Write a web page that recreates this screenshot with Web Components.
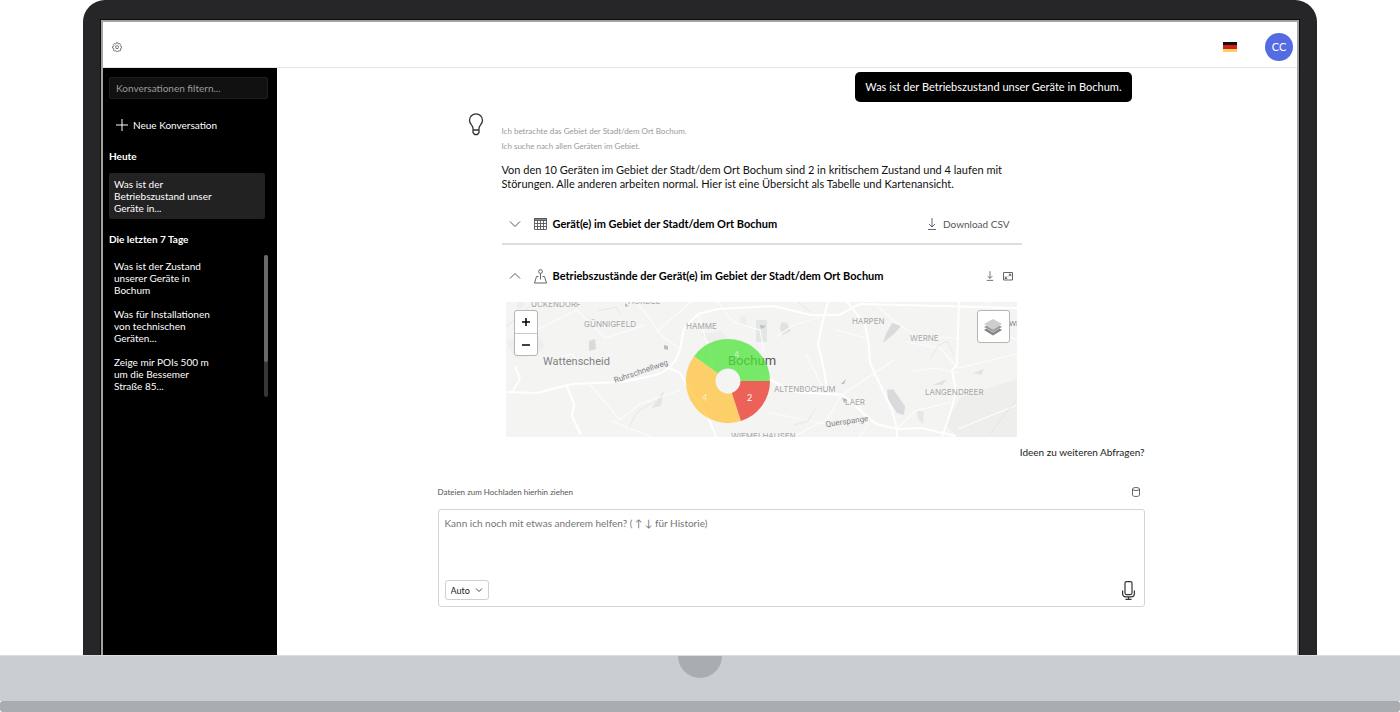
<!DOCTYPE html>
<html lang="de">
<head>
<meta charset="utf-8">
<title>Geo-Assistent</title>
<style>
  body { margin: 0; font-family: Lato, "Liberation Sans", sans-serif; background: #fff; color: #111; }
</style>
</head>
<body>
<laptop-frame>
  <app-header slot="header" initials="CC"></app-header>
  <side-bar slot="side">
    <conversation-item slot="today" active>Was ist der Betriebszustand unser Geräte in...</conversation-item>
    <conversation-item slot="week">Was ist der Zustand unserer Geräte in Bochum</conversation-item>
    <conversation-item slot="week">Was für Installationen von technischen Geräten...</conversation-item>
    <conversation-item slot="week">Zeige mir POIs 500&nbsp;m um die Bessemer Straße&nbsp;85...</conversation-item>
  </side-bar>
  <chat-view>
    <user-message>Was ist der Betriebszustand unser Geräte in Bochum.</user-message>
    <bot-message>
      <span slot="step">Ich betrachte das Gebiet der Stadt/dem Ort Bochum.</span>
      <span slot="step">Ich suche nach allen Geräten im Gebiet.</span>
      <span slot="answer">Von den 10 Geräten im Gebiet der Stadt/dem Ort Bochum sind 2 in kritischem Zustand und 4 laufen mit Störungen. Alle anderen arbeiten normal. Hier ist eine Übersicht als Tabelle und Kartenansicht.</span>
      <result-panel kind="table">Gerät(e) im Gebiet der Stadt/dem Ort Bochum</result-panel>
      <result-panel kind="map" open>Betriebszustände der Gerät(e) im Gebiet der Stadt/dem Ort Bochum<map-view slot="body"></map-view></result-panel>
    </bot-message>
    <prompt-box slot="prompt"></prompt-box>
  </chat-view>
</laptop-frame>

<script>
const BASE = `
  *, *::before, *::after { box-sizing: border-box; }
  svg { display: block; fill: none; }
  svg:not([stroke]) { stroke: currentColor; }
  button { display: flex; align-items: center; padding: 0; border: 0; background: none; color: inherit; font: inherit; cursor: pointer; }
`;
function define(name, render) {
  customElements.define(name, class extends HTMLElement {
    constructor() { super(); this.attachShadow({ mode: "open" }); }
    connectedCallback() {
      const { css, html } = render(this);
      this.shadowRoot.innerHTML = `<style>${BASE}${css}</style>${html}`;
    }
  });
}

define("laptop-frame", () => ({
  css: `
    :host { display: flex; flex-direction: column; min-height: 100vh; }
    .lid { flex: 1; display: flex; margin: 0 83px; padding: 20px 18px 0; background: #262628; border-radius: 22px 22px 0 0; }
    .screen { flex: 1; min-width: 0; display: grid; grid-template: auto 1fr / 174px minmax(0, 1fr); background: #fff; border: 2px solid #a3a3a3; border-bottom: 0; box-shadow: 0 0 0 1px #0c0c0c; }
    .head { grid-column: 1 / -1; }
    .side { display: grid; }
    .deck { height: 46px; background: #cacdd2; border-top: 1px solid #dcdddd; display: flex; justify-content: center; }
    .notch { width: 44px; height: 22px; background: #a9acb0; border-radius: 0 0 22px 22px; }
    .foot { height: 11px; background: #a9acb0; border-radius: 3px; }
  `,
  html: `
    <div class="lid"><div class="screen">
      <div class="head"><slot name="header"></slot></div>
      <div class="side"><slot name="side"></slot></div>
      <slot></slot>
    </div></div>
    <div class="deck"><div class="notch"></div></div>
    <div class="foot"></div>`
}));

define("app-header", el => ({
  css: `
    :host { display: block; }
    header { display: flex; align-items: center; height: 46px; padding: 4px 4px 0 9px; border-bottom: 1px solid #e6e6e6; color: #555; }
    .flag { margin-left: auto; margin-right: 28px; }
    .avatar { justify-content: center; width: 28px; height: 28px; border-radius: 50%; background: #556be3; color: #fff; font-size: 11px; }
  `,
  html: `<header>
    <button aria-label="Einstellungen"><svg width="10" height="10" viewBox="0 0 20 20" stroke-width="1.6"><path d="M8.3 1h3.4l.5 2.5 1.6.7 2.2-1.4 2.3 2.3-1.4 2.2.7 1.6 2.4.5v3.3l-2.4.5-.7 1.6 1.4 2.1-2.3 2.4-2.2-1.4-1.6.7-.5 2.4H8.3l-.5-2.4-1.6-.7L4 19.3 1.700 17l1.4-2.2-.7-1.6L0 12.7V9.3l2.4-.5.7-1.6L1.700 5 4 2.7l2.2 1.4 1.6-.6z" transform="translate(1 .5) scale(.92)"/><circle cx="10" cy="10.4" r="3"/></svg></button>
    <button class="flag" aria-label="Sprache: Deutsch"><svg width="14" height="10" stroke="none"><rect width="14" height="4" fill="#111"/><rect y="3" width="14" height="4" fill="#d81e14"/><rect y="7" width="14" height="3" fill="#ffce62"/></svg></button>
    <button class="avatar">${el.getAttribute("initials")}</button>
  </header>`
}));

define("side-bar", () => ({
  css: `
    :host { display: block; background: #000; color: #fff; padding: 9px 9px 0 6px; font-size: 10px; line-height: 12px; }
    input { display: block; width: 100%; height: 22px; padding: 0 6px; border: 1px solid #1f1f1f; border-radius: 2px; background: #111; color: #fff; font: inherit; }
    input::placeholder { color: #9b9b9b; opacity: 1; }
    .new { gap: 5px; margin: 20px 0 0 7px; }
    h2 { margin: 18px 0 10px; font-size: 10px; line-height: 12px; font-weight: 700; }
    .new + h2 { margin: 19px 0 11px; }
    .today { margin: 0 3px -4px 0; }
    .week { display: flex; justify-content: space-between; }
    .list { display: grid; gap: 2px; }
    .bar { width: 4px; border-radius: 2px; background: #363636; }
    .bar i { display: block; height: 75%; border-radius: 2px; background: #696969; }
  `,
  html: `
    <input type="text" aria-label="Konversationen filtern" placeholder="Konversationen filtern...">
    <button class="new"><svg width="12" height="12" viewBox="0 0 12 12"><path d="M6 0v12M0 6h12"/></svg>Neue Konversation</button>
    <h2>Heute</h2>
    <div class="today"><slot name="today"></slot></div>
    <h2>Die letzten 7 Tage</h2>
    <div class="week"><div class="list"><slot name="week"></slot></div><div class="bar"><i></i></div></div>`
}));

define("conversation-item", () => ({
  css: `
    :host { display: block; padding: 5px; border-radius: 2px; }
    :host([active]) { background: #222; }
    button { display: block; max-width: 106px; text-align: left; line-height: 12px; }
  `,
  html: `<button><slot></slot></button>`
}));

define("chat-view", () => ({
  css: `
    :host { display: block; padding: 4px 0 48px 8px; }
    .col { max-width: 707px; margin: 0 auto; display: flex; flex-direction: column; }
    .ideas { align-self: flex-end; margin: 8px 0 26px; font-size: 10px; line-height: 14px; color: #222; text-decoration: none; }
  `,
  html: `<div class="col"><slot></slot><a class="ideas" href="#ideen">Ideen zu weiteren Abfragen?</a><slot name="prompt"></slot></div>`
}));

define("user-message", () => ({
  css: `:host { display: block; align-self: flex-end; margin-right: 13px; padding: 8px 10px; border-radius: 5px; background: #000; color: #fff; font-size: 11px; line-height: 14px; }`,
  html: `<slot></slot>`
}));

define("bot-message", () => ({
  css: `
    :host { display: flex; gap: 18px; margin-top: 11px; padding-left: 30px; }
    .bulb { flex: none; color: #333; }
    .content { flex: 1; min-width: 0; max-width: 520px; padding-top: 11px; }
    .steps { display: grid; font-size: 8px; line-height: 15px; color: #999; }
    .answer { margin: 9px 0 14px; font-size: 11px; line-height: 14px; }
  `,
  html: `
    <svg class="bulb" width="16" height="23" viewBox="0 0 16 23" stroke-width="1.3"><path d="M5 17v-1.800C5 12.500 1.500 11.500 1.500 7.200a6.500 6.300 0 0 1 13 0C14.500 11.500 11 12.500 11 15.200V17zM5 17v2.500l1.500 2h3l1.500-2V17"/></svg>
    <div class="content">
      <div class="steps"><slot name="step"></slot></div>
      <p class="answer"><slot name="answer"></slot></p>
      <slot></slot>
    </div>`
}));

const DOWN = `<svg width="10" height="12" viewBox="0 0 10 12" stroke-width=".9"><path d="M5 0v9M2 6l3 3 3-3M1 11.500h8"/></svg>`;
define("result-panel", el => {
  const isTable = el.getAttribute("kind") === "table", open = el.hasAttribute("open");
  return {
    css: `
      :host { display: block; margin-bottom: 12px; }
      :host([open]) { margin-bottom: 0; }
      .row { display: flex; align-items: center; height: 38px; padding: 0 9px 0 7px; color: #555; }
      :host(:not([open])) .row { height: 40px; border-bottom: 2px solid #dedede; }
      h3 { margin: 0 0 0 6px; font-size: 11px; line-height: 14px; font-weight: 700; color: #000; }
      .icon { margin-left: 13px; }
      .actions { display: flex; gap: 9px; margin-left: auto; font-size: 10px; padding-right: ${isTable ? 3 : 0}px; }
      .actions button { gap: 6px; }
      .body { margin: 7px 5px 0 4px; }
    `,
    html: `
      <div class="row">
        <button class="toggle" aria-expanded="${open}" aria-label="Bereich umschalten"><svg width="12" height="12" viewBox="0 0 12 12"><path d="${open ? "M1 8.500l5-5 5 5" : "M1 3.500l5 5 5-5"}"/></svg></button>
        ${isTable
          ? `<svg class="icon" width="13" height="12" viewBox="0 0 13 12" stroke-width=".9"><path fill="#888" d="M.5.5h12v2H.5z"/><path d="M.5.5h12v11H.500zM.5 5.500h12M.5 8.500h12M3.500 2.500v9M6.500 2.500v9M9.500 2.500v9"/></svg>`
          : `<svg class="icon" width="13" height="15" viewBox="0 0 13 15" stroke-width=".9"><circle cx="6.500" cy="2.500" r="1.900"/><path d="M6.500 4.500v6M4.500 7.500H2.500l-2 6.500h12l-2-6.500h-2"/></svg>`}
        <h3><slot></slot></h3>
        <div class="actions">${isTable
          ? `<button>${DOWN}Download CSV</button>`
          : `<button aria-label="Herunterladen"><svg width="8" height="10" viewBox="0 0 10 12"><path d="M5 0v9M2 6l3 3 3-3M1 11.500h8"/></svg></button><button aria-label="Vergrößern"><svg width="10" height="10" viewBox="0 0 10 10" stroke-width=".9"><path d="M.5 1.500h9v7.500h-9zM5.800 3.200h2v2M7.600 3.400L5.600 5.200M2.200 5.500v2h2M2.400 7.300l1.800-1.800"/></svg></button>`}</div>
      </div>
      <div class="body"><slot name="body"></slot></div>`
  };
});

define("map-view", () => {
  const labels = [
    [25, 5, "ÜCKENDORF"], [122, 2, "HORDEL"], [78, 25, "GÜNNIGFELD"], [180, 27, "HAMME"],
    [346, 22, "HARPEN"], [404, 39, "WERNE"], [268, 90, "ALTENBOCHUM"], [339, 103, "LAER"],
    [419, 93, "LANGENDREER"], [225, 137, "WIEMELHAUSEN"]
  ].map(([x, y, t]) => `<text x="${x}" y="${y}">${t}</text>`).join("");
  return {
    css: `
      :host { display: grid; background: #f4f4f3; }
      :host > * { grid-area: 1 / 1; }
      .map { width: 100%; height: 135px; grid-area: 1 / 1; }
      text { stroke: none; fill: #a6a8aa; font-size: 8px; font-family: Inter, sans-serif; }
      .town { font-family: Roboto, sans-serif; font-size: 11px; fill: #808284; }
      .city { font-family: Roboto, sans-serif; font-size: 13px; fill: #555; }
      .road { font-family: Roboto, sans-serif; fill: #808284; }
      .count { fill: #fff; font-family: Lato, sans-serif; font-size: 9px; }
      .faint { fill-opacity: .6; }
      .ctl { grid-area: 1 / 1; display: flex; justify-content: space-between; align-items: flex-start; padding: 8px 7px 0 8px; z-index: 1; }
      .box { border: 1px solid #b5b5b5; border-radius: 3px; background: #fff; overflow: hidden; }
      .box button { justify-content: center; width: 22px; height: 22px; color: #000; }
      .box button + button { border-top: 1px solid #ccc; }
      .box .layers { width: 31px; height: 31px; }
    `,
    html: `
      <div class="ctl">
        <div class="box">
          <button aria-label="Vergrößern"><svg width="8" height="8" viewBox="0 0 8 8" stroke-width="1.500"><path d="M4 0v8M0 4h8"/></svg></button>
          <button aria-label="Verkleinern"><svg width="8" height="8" viewBox="0 0 8 8" stroke-width="1.500"><path d="M0 4h8"/></svg></button>
        </div>
        <div class="box"><button class="layers" aria-label="Ebenen"><svg width="20" height="18" viewBox="0 0 20 18" stroke="none"><path fill="#858585" d="M1 12l9 5.500 9-5.500-2.500-1.500L10 14.500 3.500 10.500z"/><path fill="#9c9c9c" d="M1 9l9 5 9-5-2.500-1.500L10 11.500 3.500 7.500z"/><path fill="#cdcdcd" d="M10 1l9 5-9 5.500L1 6z"/></svg></button></div>
      </div>
      <svg class="map" viewBox="0 0 511 135" preserveAspectRatio="xMidYMid slice" role="img" aria-label="Karte von Bochum">
        <g fill="#eeeeed" stroke="none">
          <path d="M455 95l25-8 31-10v58h-60l-12-14z"/><path d="M0 40l30-10 9 14-10 10-20 2z"/><path d="M195 32l20-3 8 8-15 8z"/>
          <path d="M234 14h6v9h-6zM12 0h7l-2 6h-6z"/>
        </g>
        <g fill="#d9dadc" stroke="none">
          <path d="M386 21l9 3-6 7-12 10 3-9z"/><path d="M381 88l6-1 12 17-1 9-7-2-9-14z"/><path d="M250 18h11v22h-11z" opacity=".6"/>
          <path d="M83 39l6-2 1 10-7 2z"/><path d="M275 20l6 1 4 8-8 4-3-6z" opacity=".7"/><path d="M155 92l3-3-3 15-9 2z" opacity=".6"/>
          <path d="M427 83l14-6-5 6zM467 71l11-4-3 6z" opacity=".7"/><path d="M411 108l7 2-1 12-5-5z" opacity=".5"/><path d="M158 43l4 1v4l-4-1zM119 1l4 3-4 1zM254 23l6 1-5 3zM335 82l5-5-2 5zM336 96l6 1-4 4z" fill="#bbbdc0"/>
        </g>
        <g stroke="#fff" stroke-width="2">
          <path d="M0 90l31 1 35-9 51-2 33-7c14-5 20-14 23-22 4-14 2-22 9-29l10-10 20-5 55-3 38 9h28l21-11 80 2 75 2 32-6"/>
          <path d="M60 82l8 20-2 12 9 19M9 64l5 13-8 13M179 80l24 37 7 18M179 80l-5-9-11-5M254 73l35 17 48 3 33 29 21 5 24-1 35 8"/>
          <path d="M322 0l-6 22-4 20 6 26 4 25M341 0l18 22 4 22 1 17 22 47 5 19v8M453 0l-1 35-1 28-5 5 4 22-6 22-8 23"/>
        </g>
        <g stroke="#fcfcfc" stroke-width="1.200">
          <path d="M84 83l30 35 20-16 40-14M106 119l16 7 25 9M150 30l35-30M192 12l13 42 4 20M212 0l15 20 27 8 4 22M31 28l40-20 28 28 40-13M40 60l26-8 11 14M131 0l25 34 18 13"/>
          <path d="M270 35l18-12 26-8M287 135l34-18 15-24 52-35M367 0l20 18 24 17 40 1M391 127l18-18 36-9M400 40l34 6 18 20 59-14M480 0l11 30 20 8M452 127l59-24M260 110l60 12M300 52l17 34 22 8M405 70l22-4 26 5M330 28l30 8M349 93l13 30-9 12"/>
        </g>
        <g stroke="#e3e3e2" stroke-width=".8"><path d="M425 55l7-11 9-5 7 14M92 9l18-4 5 8M150 99l-18 10-9 16M0 25l23-20M292 0l13 10M310 105l-8 14-14 4M484 132l27-35"/></g>
        ${labels}
        <text class="town" x="37" y="63">Wattenscheid</text>
        <text class="city" x="222" y="63">Bochum</text>
        <text class="road" transform="translate(109 81) rotate(-19)">Ruhrschnellweg</text>
        <text class="road" transform="translate(320 125) rotate(-8)">Querspange</text>
        <text class="road" x="503" y="24">Wi</text>
        <g stroke="none" fill-opacity=".75">
          <path fill="#4de438" d="M264 79A42 42 0 0 0 188 54.300L211.900 71.600A12.500 12.500 0 0 1 234.500 79z"/>
          <path fill="#ffc339" d="M188 54.300A42 42 0 0 0 235 119L225.900 90.900A12.500 12.500 0 0 1 211.900 71.600z"/>
          <path fill="#e93024" d="M235 119A42 42 0 0 0 264 79H234.500A12.500 12.500 0 0 1 225.900 90.900z"/>
        </g>
        <text class="count faint" x="228" y="56">4</text><text class="count faint" x="196" y="99">4</text><text class="count" x="241" y="99">2</text>
      </svg>`
  };
});

define("prompt-box", () => ({
  css: `
    :host { display: block; }
    .top { display: flex; justify-content: space-between; align-items: center; height: 14px; margin-bottom: 10px; padding-right: 5px; font-size: 8px; line-height: 14px; color: #555; }
    .box { display: flex; flex-direction: column; border: 1px solid #d4d4d4; border-radius: 3px; }
    textarea { display: block; height: 68px; padding: 6px; border: 0; outline: 0; resize: none; background: none; font: 10px/14px Lato, "Noto Sans", sans-serif; }
    textarea::placeholder { color: #757575; opacity: 1; }
    .bottom { display: flex; justify-content: space-between; align-items: center; height: 28px; padding: 0 9px 4px 6px; }
    .pick { display: grid; align-items: center; width: 44px; color: #333; }
    .pick > * { grid-area: 1 / 1; }
    .pick svg { justify-self: end; margin-right: 6px; pointer-events: none; }
    select { width: 100%; height: 20px; padding: 0 5px; appearance: none; border: 1px solid #d0d0d0; border-radius: 3px; background: #fff; font: 9px Lato, sans-serif; color: #222; }
  `,
  html: `
    <div class="top"><label for="q">Dateien zum Hochladen hierhin ziehen</label>
      <button aria-label="Verlauf leeren"><svg width="8" height="10" viewBox="0 0 8 10" stroke-width=".9"><path d="M.5 2v6c0 2 7 2 7 0V2"/><ellipse cx="4" cy="2" rx="3.500" ry="1.500"/></svg></button></div>
    <div class="box">
      <textarea id="q" placeholder="Kann ich noch mit etwas anderem helfen? ( ↑ ↓ für Historie)"></textarea>
      <div class="bottom">
        <span class="pick"><select aria-label="Modus"><option>Auto</option></select><svg width="8" height="8" viewBox="0 0 8 8" stroke-width=".9"><path d="M1 2.500l3 3 3-3"/></svg></span>
        <button aria-label="Spracheingabe"><svg width="13" height="19" viewBox="0 0 13 19" stroke="#333" stroke-width="1.200"><rect x="3" y=".6" width="7" height="13" rx="1.500"/><path d="M.6 9.500v3c0 2 1.400 3.300 3.400 3.300h5c2 0 3.400-1.300 3.400-3.300v-3M6.500 16v2.400M3.500 18.400h6"/></svg></button>
      </div>
    </div>`
}));
</script>
</body>
</html>
